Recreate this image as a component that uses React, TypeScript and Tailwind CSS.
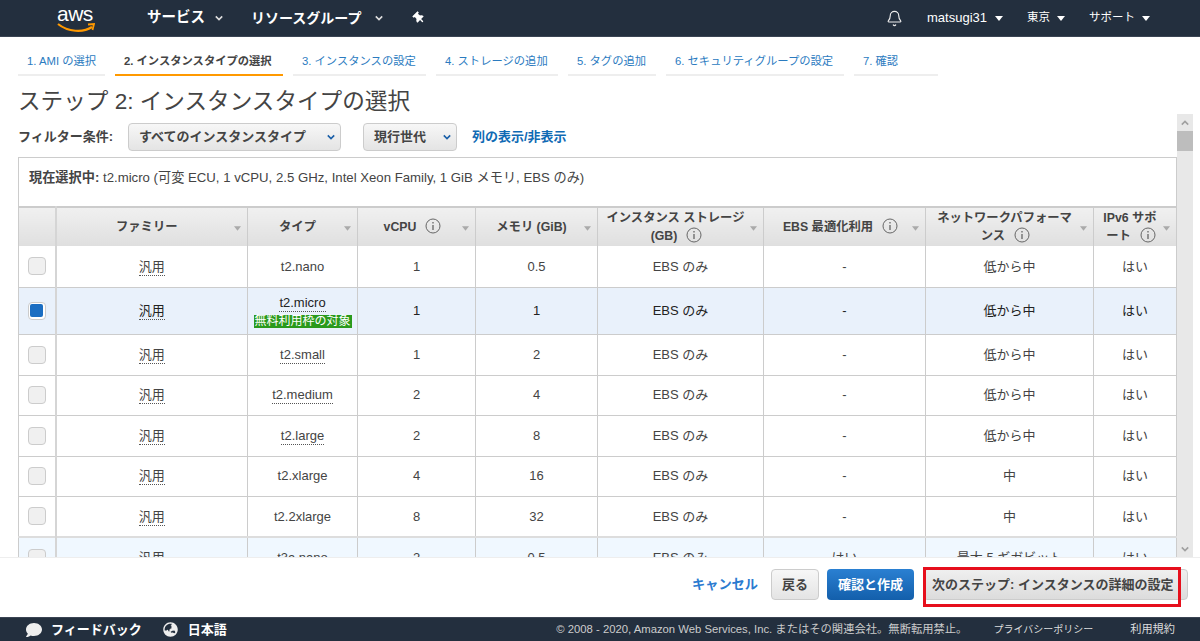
import React from "react";
import { Bell } from "lucide-react";
import { FaComment, FaGlobeAsia, FaThumbtack } from "react-icons/fa";

const Caret = ({ className = "" }: { className?: string }) => (
  <svg width="8" height="5" viewBox="0 0 8 5" className={className}>
    <path d="M0 0h8L4 5z" fill="currentColor" />
  </svg>
);

const Chevron = ({ className = "" }: { className?: string }) => (
  <svg width="8" height="6" viewBox="0 0 10 6" className={className}>
    <path d="M1 1l4 4 4-4" fill="none" stroke="currentColor" strokeWidth="2" />
  </svg>
);

const Info = () => (
  <svg width="16" height="16" viewBox="0 0 16 16" className="inline-block align-[-3px] ml-[9px] mr-[-2px] text-[#666]">
    <circle cx="8" cy="8" r="7" fill="none" stroke="currentColor" strokeWidth="1" />
    <path d="M8 4v1.4M8 7v5" stroke="currentColor" strokeWidth="1.3" />
  </svg>
);

const tabs = [
  { label: "1. AMI の選択", w: "w-[87px]" },
  { label: "2. インスタンスタイプの選択", w: "w-[168px]", active: true },
  { label: "3. インスタンスの設定", w: "w-[133px]" },
  { label: "4. ストレージの追加", w: "w-[122px]" },
  { label: "5. タグの追加", w: "w-[88px]" },
  { label: "6. セキュリティグループの設定", w: "w-[178px]" },
  { label: "7. 確認", w: "w-[84px]" },
];

type Row = {
  type: string;
  tip: boolean;
  cpu: string;
  mem: string;
  h: string;
  ebs?: string;
  net: string;
  selected?: boolean;
  tint?: boolean;
  thick?: boolean;
};

const rows: Row[] = [
  { type: "t2.nano", tip: false, cpu: "1", mem: "0.5", h: "h-[41px]", net: "低から中" },
  { type: "t2.micro", tip: true, cpu: "1", mem: "1", h: "h-[47px]", net: "低から中", selected: true },
  { type: "t2.small", tip: true, cpu: "1", mem: "2", h: "h-[41px]", net: "低から中" },
  { type: "t2.medium", tip: true, cpu: "2", mem: "4", h: "h-[40px]", net: "低から中" },
  { type: "t2.large", tip: true, cpu: "2", mem: "8", h: "h-[41px]", net: "低から中" },
  { type: "t2.xlarge", tip: false, cpu: "4", mem: "16", h: "h-[40px]", net: "中" },
  { type: "t2.2xlarge", tip: false, cpu: "8", mem: "32", h: "h-[41px]", net: "中", thick: true },
  { type: "t3a.nano", tip: false, cpu: "2", mem: "0.5", h: "h-[41px]", net: "最大 5 ギガビット", ebs: "はい", tint: true },
];

const Head = ({ children, caret = true }: { children?: React.ReactNode; caret?: boolean }) => (
  <th className="relative border-x border-[#ccc] pl-[8px] pr-[18px] text-center text-[12.3px] font-bold leading-[17px] text-[#444] bg-gradient-to-b from-[#f0f0f0] to-[#dfdfdf] first:border-r-[2px] first:border-r-[#d5d5d5]">
    {children}
    {caret && <Caret className="absolute right-[6px] top-[18px] w-[7px] text-[#aaa]" />}
  </th>
);

const cell = "border-x border-[#ccc] text-center align-middle";

export default function App() {
  return (
    <div className="h-[641px] w-[1200px] flex flex-col overflow-hidden bg-white text-[13px] text-[#444] font-['Liberation_Sans','Noto_Sans_CJK_JP',sans-serif]">
      <header className="h-[37px] shrink-0 bg-[#232f3e] border-b border-[#3a4453] text-white flex items-center">
        <div className="w-[147px] pl-[57px] shrink-0">
          <div className="relative w-[40px] h-[30px]">
            <span className="absolute left-0 top-[-1px] text-[21px] leading-[24px] font-normal tracking-[-0.5px]">aws</span>
            <svg width="38" height="11" viewBox="0 0 38 11" className="absolute left-0 top-[20px]">
              <path d="M1 1c10 8 25 9 34 3" fill="none" stroke="#f90" strokeWidth="2.2" />
              <path d="M31 1.5l6-.5-1.5 6" fill="none" stroke="#f90" strokeWidth="1.8" />
            </svg>
          </div>
        </div>
        <span className="text-[14.5px] font-bold w-[58px] whitespace-nowrap">サービス</span>
        <Chevron className="ml-[10px] text-[#ddd]" />
        <span className="ml-[28px] text-[14px] font-bold whitespace-nowrap w-[112px]">リソースグループ</span>
        <Chevron className="ml-[12px] text-[#ddd]" />
        <FaThumbtack className="ml-[30px] text-[12px] -rotate-45" />
        <div className="flex-1" />
        <Bell size={17} strokeWidth={1.6} className="text-[#eee]" />
        <span className="ml-[24px] whitespace-nowrap">matsugi31</span>
        <Caret className="ml-[8px]" />
        <span className="ml-[24px] text-[11.5px] whitespace-nowrap">東京</span>
        <Caret className="ml-[7px]" />
        <span className="ml-[24px] text-[11.5px] whitespace-nowrap">サポート</span>
        <Caret className="ml-[7px] mr-[50px]" />
      </header>

      <nav className="flex gap-[10px] pl-[18px] pt-[13px] shrink-0">
        {tabs.map((t) => (
          <div
            key={t.label}
            className={`${t.w} h-[26px] pl-[9px] whitespace-nowrap text-[11.3px] leading-[23px] border-b-[2px] ${
              t.active ? "border-[#f90] text-[#444] font-bold" : "border-[#eee] text-[#2b7bbf]"
            }`}
          >
            {t.label}
          </div>
        ))}
      </nav>

      <h1 className="h-[38px] shrink-0 pl-[18px] text-[22.6px] leading-[52px] font-normal text-[#444] whitespace-nowrap">
        ステップ 2: インスタンスタイプの選択
      </h1>

      <div className="flex-1 min-h-0 flex pl-[18px]">
        <div className="w-[1159px] overflow-hidden">
          <div className="flex items-center h-[43px] pt-[9px] pb-[6px]">
            <span className="font-bold w-[110px]">フィルター条件:</span>
            <div className="w-[213px] h-[28px] rounded-[4px] border border-[#ccc] bg-gradient-to-b from-[#f7f7f7] to-[#e4e4e4] flex items-center pl-[10px] font-bold text-[13px] text-[#444]">
              <span className="flex-1 whitespace-nowrap">すべてのインスタンスタイプ</span>
              <Chevron className="mr-[5px] text-[#1a5fa8]" />
            </div>
            <div className="ml-[22px] w-[94px] h-[28px] rounded-[4px] border border-[#ccc] bg-gradient-to-b from-[#f7f7f7] to-[#e4e4e4] flex items-center pl-[10px] font-bold">
              <span className="flex-1 whitespace-nowrap">現行世代</span>
              <Chevron className="mr-[5px] text-[#1a5fa8]" />
            </div>
            <span className="ml-[15px] font-bold text-[#0f6ab4] whitespace-nowrap">列の表示/非表示</span>
          </div>
          <div className="h-[49px] border-x border-t-[1px] border-[#ccc] pl-[10px] pt-[12px] text-[13.2px] leading-[16px] text-[#444]">
            <b>現在選択中:</b> t2.micro (可変 ECU, 1 vCPU, 2.5 GHz, Intel Xeon Family, 1 GiB メモリ, EBS のみ)
          </div>
          <table className="table-fixed border-collapse w-[1158px]">
            <colgroup>
              <col className="w-[37px]" />
              <col className="w-[192px]" />
              <col className="w-[110px]" />
              <col className="w-[118px]" />
              <col className="w-[122px]" />
              <col className="w-[166px]" />
              <col className="w-[162px]" />
              <col className="w-[168px]" />
              <col className="w-[83px]" />
            </colgroup>
            <thead>
              <tr className="h-[39px] border-t-[2px] border-[#ccc]">
                <Head caret={false} />
                <Head>ファミリー</Head>
                <Head>タイプ</Head>
                <Head>
                  vCPU
                  <Info />
                </Head>
                <Head>メモリ (GiB)</Head>
                <Head>
                  インスタンス ストレージ (GB)
                  <Info />
                </Head>
                <Head>
                  EBS 最適化利用
                  <Info />
                </Head>
                <Head>
                  ネットワークパフォーマンス
                  <Info />
                </Head>
                <Head>
                  IPv6 サポート
                  <Info />
                </Head>
              </tr>
            </thead>
            <tbody>
              {rows.map((r) => {
                const tx = r.selected ? "text-[#222]" : "text-[#444]";
                return (
                  <tr
                    key={r.type}
                    className={`${r.h} ${r.thick ? "border-b-[2px] border-[#ddd]" : "border-b border-[#ccc]"} ${
                      r.selected ? "bg-[#e9f1fb]" : r.tint ? "bg-[#f0f8ff]" : "bg-white"
                    } ${tx}`}
                  >
                    <td className={`${cell} border-r-[2px] border-r-[#d5d5d5]`}>
                      <div
                        className={`mx-auto w-[18px] h-[18px] rounded-[4px] border border-[#ccc] flex items-center justify-center ${
                          r.selected ? "bg-white" : "bg-[#f0f0f0]"
                        }`}
                      >
                        {r.selected && <div className="w-[13px] h-[13px] rounded-[2px] bg-[#1b6ec2]" />}
                      </div>
                    </td>
                    <td className={cell}>
                      <span className="border-b border-dotted border-[#555] pb-[1px]">汎用</span>
                    </td>
                    <td className={cell}>
                      <span className={r.tip ? "border-b border-dotted border-[#555] pb-[1px]" : ""}>{r.type}</span>
                      {r.selected && (
                        <div className="mx-auto mt-[3px] w-[98px] h-[13px] bg-[#2a9a1c] text-white text-[12px] leading-[13px] whitespace-nowrap">
                          無料利用枠の対象
                        </div>
                      )}
                    </td>
                    <td className={cell}>{r.cpu}</td>
                    <td className={cell}>{r.mem}</td>
                    <td className={cell}>EBS のみ</td>
                    <td className={cell}>{r.ebs ?? "-"}</td>
                    <td className={cell}>{r.net}</td>
                    <td className={cell}>はい</td>
                  </tr>
                );
              })}
            </tbody>
          </table>
        </div>
        <div className="w-[16px] bg-[#e8e8e8] flex flex-col items-center text-[#a0a0a0]">
          <div className="h-[17px] w-full flex items-center justify-center">
            <Chevron className="rotate-180" />
          </div>
          <div className="h-[20px] w-full bg-[#bdbdbd]" />
          <div className="flex-1" />
          <div className="h-[17px] w-full flex items-center justify-center">
            <Chevron />
          </div>
        </div>
      </div>

      <div className="h-[60px] shrink-0 flex items-start justify-end pr-[12px] pt-[11px] border-t border-[#eee] text-[13px] font-bold">
        <span className="mr-[13px] mt-[6px] text-[13.2px] font-bold text-[#2b7bd0] whitespace-nowrap">キャンセル</span>
        <div className="w-[48px] h-[31px] rounded-[4px] border border-[#ccc] bg-gradient-to-b from-[#f7f7f7] to-[#e4e4e4] flex items-center justify-center text-[#444]">
          戻る
        </div>
        <div className="ml-[8px] w-[87px] h-[31px] rounded-[4px] bg-gradient-to-b from-[#2a80d2] to-[#135fab] flex items-center justify-center text-white">
          確認と作成
        </div>
        <div className="relative ml-[9px] w-[265px] h-[31px] rounded-[4px] border border-[#ccc] bg-gradient-to-b from-[#efefef] to-[#dcdcdc] flex items-center pl-[8px] text-[#444] whitespace-nowrap">
          次のステップ: インスタンスの詳細の設定
          <div className="absolute left-[-1px] top-[-3px] w-[258px] h-[40px] border-[3px] border-[#e60f1c]" />
        </div>
      </div>

      <footer className="h-[24px] shrink-0 bg-[#232f3e] border-t border-[#3a4453] text-white flex items-center">
        <FaComment className="ml-[26px] text-[16px] text-[#eee]" />
        <span className="ml-[9px] font-bold whitespace-nowrap">フィードバック</span>
        <FaGlobeAsia className="ml-[21px] text-[15px] text-[#eee]" />
        <span className="ml-[10px] font-bold whitespace-nowrap">日本語</span>
        <div className="flex-1" />
        <span className="text-[11.3px] text-[#ccc] whitespace-nowrap">© 2008 - 2020, Amazon Web Services, Inc. またはその関連会社。無断転用禁止。</span>
        <span className="ml-[26px] text-[10px] text-[#ddd] whitespace-nowrap">プライバシーポリシー</span>
        <span className="ml-[37px] mr-[25px] text-[11.2px] text-[#ddd] whitespace-nowrap">利用規約</span>
      </footer>
    </div>
  );
}
